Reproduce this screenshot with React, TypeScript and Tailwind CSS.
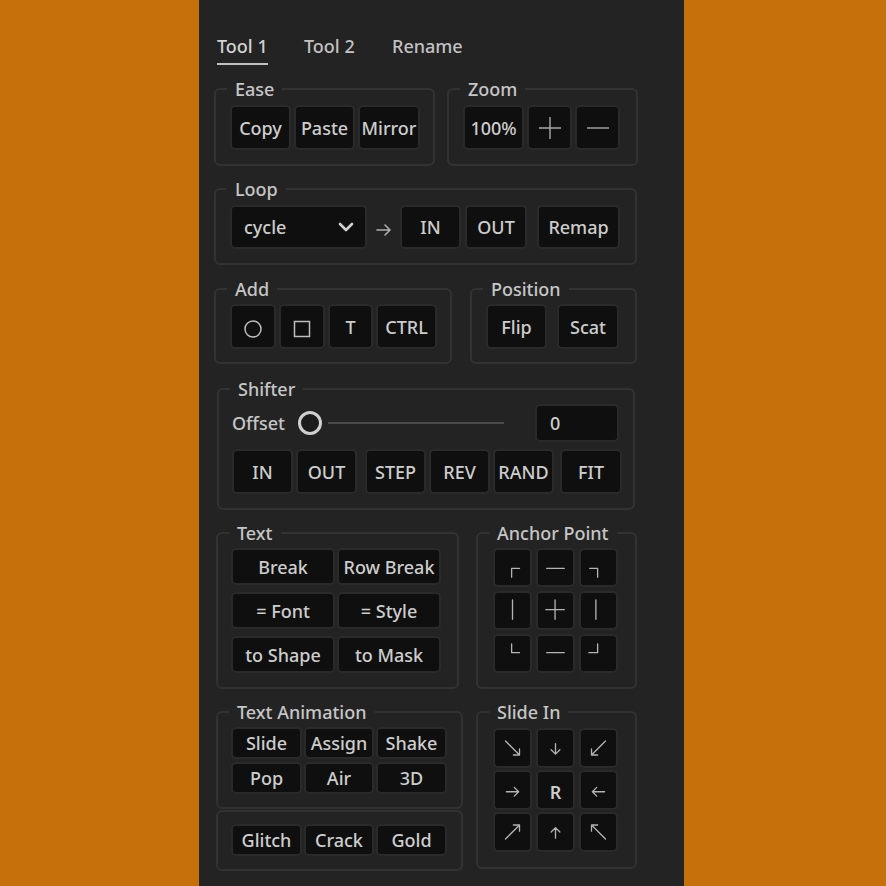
import type { ReactNode } from "react";

const Btn = ({ className = "", children }: { className?: string; children: ReactNode }) => (
  <div
    className={`flex items-center justify-center rounded-[5px] border-2 border-[#2a2a2a] bg-[#0f0f0f] pt-[1px] text-[18px] text-[#cdcdcd] ${className}`}
  >
    {children}
  </div>
);

const Group = ({ label, className = "", children }: { label?: string; className?: string; children: ReactNode }) => (
  <fieldset className={`rounded-[6px] border-2 border-[#323232] ${className}`}>
    {label && (
      <legend className="ml-[11px] px-[8px] text-[18px] leading-[24px] text-[#c6c6c6]">{label}</legend>
    )}
    {children}
  </fieldset>
);

const Icon = ({ d }: { d: string }) => (
  <svg viewBox="0 0 40 40" className="h-full w-full" fill="none" stroke="#b4b4b4" strokeWidth="1.5" strokeLinecap="round" strokeLinejoin="round">
    <path d={d} />
  </svg>
);

const anchors = [
  "M19 31V21H28",
  "M10 21H30",
  "M10 21H19V31",
  "M20 8V30",
  "M9 19H30M19.5 8V30",
  "M17 8V30",
  "M19 9V19H28",
  "M10 19H30",
  "M9 19H19V9",
];

const slides: (string | null)[] = [
  "M12 12L28 28M28 21V28H21",
  "M20 15V27M15 22L20 27L25 22",
  "M28 12L12 28M12 21V28H19",
  "M13 22H27M22 17L27 22L22 27",
  null,
  "M27 22H13M18 17L13 22L18 27",
  "M12 28L28 12M21 12H28V19",
  "M20 27V15M15 20L20 15L25 20",
  "M28 28L12 12M12 19V12H19",
];

export default function App() {
  return (
    <div className="min-h-screen overflow-hidden bg-[#c5700b] font-['Noto_Sans','Liberation_Sans',sans-serif] font-medium">
      <div className="ml-[199px] flex min-h-[886px] w-[485px] flex-col bg-[#232323] pb-[20px]">
        {/* Tabs */}
        <div className="ml-[18px] mt-[32px] flex text-[18px] leading-[28px]">
          <div className="w-[87px]">
            <span className="inline-block border-b-2 border-[#c0c0c0] pb-[3px] text-[#d2d2d2]">Tool 1</span>
          </div>
          <div className="w-[88px] text-[#c2c2c2]">Tool 2</div>
          <div className="text-[#c2c2c2]">Rename</div>
        </div>

        {/* Ease / Zoom */}
        <div className="ml-[15px] mt-[12px] flex gap-[12px]">
          <Group label="Ease" className="w-[221px]">
            <div className="flex gap-[3px] pb-[14px] pl-[14px] pt-[4px]">
              <Btn className="h-[45px] w-[61px]">Copy</Btn>
              <Btn className="h-[45px] w-[61px]">Paste</Btn>
              <Btn className="h-[45px] w-[62px]">Mirror</Btn>
            </div>
          </Group>
          <Group label="Zoom" className="w-[191px]">
            <div className="flex gap-[3px] pb-[14px] pl-[14px] pt-[4px]">
              <Btn className="h-[45px] w-[61px]">100%</Btn>
              <Btn className="h-[45px] w-[45px]">
                <svg viewBox="0 0 22 22" className="h-[22px] w-[22px]" stroke="#a8a8a8" strokeWidth="1.4">
                  <path d="M0 11H22M11 0V22" />
                </svg>
              </Btn>
              <Btn className="h-[45px] w-[45px]">
                <svg viewBox="0 0 22 22" className="h-[22px] w-[22px]" stroke="#a8a8a8" strokeWidth="1.4">
                  <path d="M0 11H22" />
                </svg>
              </Btn>
            </div>
          </Group>
        </div>

        {/* Loop */}
        <div className="ml-[15px] mt-[11px] flex">
          <Group label="Loop" className="w-[423px]">
            <div className="flex items-center pb-[14px] pl-[14px] pt-[4px]">
              <div className="flex h-[44px] w-[137px] items-center justify-between rounded-[5px] border-2 border-[#2a2a2a] bg-[#0f0f0f] pl-[12px] pr-[11px] text-[18px] text-[#cdcdcd]">
                <span className="pt-[1px]">cycle</span>
                <svg viewBox="0 0 16 10" className="h-[10px] w-[16px]" fill="none" stroke="#d0d0d0" strokeWidth="2.6" strokeLinecap="round" strokeLinejoin="round">
                  <path d="M2 2L8 8L14 2" />
                </svg>
              </div>
              <svg viewBox="0 0 16 12" className="ml-[9px] mt-[6px] h-[12px] w-[16px]" fill="none" stroke="#b0b0b0" strokeWidth="1.5" strokeLinecap="round" strokeLinejoin="round">
                <path d="M1 6H14M9 1L14 6L9 11" />
              </svg>
              <Btn className="ml-[8px] h-[44px] w-[61px]">IN</Btn>
              <Btn className="ml-[4px] h-[44px] w-[62px]">OUT</Btn>
              <Btn className="ml-[10px] h-[44px] w-[83px]">Remap</Btn>
            </div>
          </Group>
        </div>

        {/* Add / Position */}
        <div className="ml-[15px] mt-[12px] flex gap-[18px]">
          <Group label="Add" className="w-[238px]">
            <div className="flex gap-[3px] pb-[13px] pl-[14px] pt-[3px]">
              <Btn className="h-[45px] w-[46px]">
                <svg viewBox="0 0 20 20" className="mt-[4px] h-[20px] w-[20px]" fill="none" stroke="#bdbdbd" strokeWidth="1.5">
                  <circle cx="10" cy="10" r="8" />
                </svg>
              </Btn>
              <Btn className="h-[45px] w-[46px]">
                <svg viewBox="0 0 18 18" className="mt-[3px] h-[18px] w-[18px]" fill="none" stroke="#bdbdbd" strokeWidth="1.5">
                  <rect x="1.5" y="1.5" width="15" height="15" />
                </svg>
              </Btn>
              <Btn className="h-[45px] w-[45px]">T</Btn>
              <Btn className="h-[45px] w-[61px]">CTRL</Btn>
            </div>
          </Group>
          <Group label="Position" className="w-[167px]">
            <div className="flex gap-[10px] pb-[13px] pl-[14px] pt-[3px]">
              <Btn className="h-[45px] w-[61px]">Flip</Btn>
              <Btn className="h-[45px] w-[62px]">Scat</Btn>
            </div>
          </Group>
        </div>

        {/* Shifter */}
        <div className="ml-[18px] mt-[13px] flex">
          <Group label="Shifter" className="w-[418px]">
            <div className="pb-[14px] pl-[13px] pt-[3px]">
              <div className="flex h-[38px] items-center">
                <span className="w-[66px] pt-[1px] text-[18px] text-[#c6c6c6]">Offset</span>
                <div className="flex w-[206px] items-center">
                  <div className="h-[24px] w-[24px] rounded-full border-[3px] border-[#d0d0d0] bg-[#1c1c1c]" />
                  <div className="ml-[6px] h-[2px] flex-1 bg-[#4a4a4a]" />
                </div>
                <div className="ml-[31px] flex h-[38px] w-[84px] items-center rounded-[5px] border-2 border-[#2a2a2a] bg-[#0f0f0f] pl-[13px] pt-[1px] text-[18px] text-[#cdcdcd]">
                  0
                </div>
              </div>
              <div className="mt-[7px] flex">
                <Btn className="h-[45px] w-[61px]">IN</Btn>
                <Btn className="ml-[3px] h-[45px] w-[61px]">OUT</Btn>
                <Btn className="ml-[8px] h-[45px] w-[61px]">STEP</Btn>
                <Btn className="ml-[3px] h-[45px] w-[61px]">REV</Btn>
                <Btn className="ml-[3px] h-[45px] w-[61px]">RAND</Btn>
                <Btn className="ml-[6px] h-[45px] w-[62px]">FIT</Btn>
              </div>
            </div>
          </Group>
        </div>

        {/* Text / Anchor Point */}
        <div className="ml-[17px] mt-[11px] flex gap-[17px]">
          <Group label="Text" className="w-[243px]">
            <div className="grid grid-cols-[104px_104px] gap-x-[2px] gap-y-[7px] pb-[14px] pl-[13px] pt-[3px]">
              {["Break", "Row Break", "= Font", "= Style", "to Shape", "to Mask"].map((t) => (
                <Btn key={t} className="h-[37px]">{t}</Btn>
              ))}
            </div>
          </Group>
          <Group label="Anchor Point" className="w-[161px]">
            <div className="grid grid-cols-[39px_39px_39px] gap-[4px] pb-[14px] pl-[15px] pt-[3px]">
              {anchors.map((d) => (
                <Btn key={d} className="h-[39px] !pt-0">
                  <Icon d={d} />
                </Btn>
              ))}
            </div>
          </Group>
        </div>

        {/* Text Animation / Slide In */}
        <div className="ml-[17px] mt-[11px] flex items-start gap-[13px]">
          <div className="flex w-[247px] flex-col">
            <Group label="Text Animation">
              <div className="grid grid-cols-[71px_70px_71px] gap-x-[2px] gap-y-[3px] pb-[13px] pl-[13px] pt-[3px]">
                {["Slide", "Assign", "Shake", "Pop", "Air", "3D"].map((t) => (
                  <Btn key={t} className="h-[32px]">{t}</Btn>
                ))}
              </div>
            </Group>
            <div className="mt-[1px] rounded-[6px] border-2 border-[#323232] pb-[13px] pl-[13px] pt-[12px]">
              <div className="grid grid-cols-[71px_70px_71px] gap-x-[2px]">
                {["Glitch", "Crack", "Gold"].map((t) => (
                  <Btn key={t} className="h-[32px]">{t}</Btn>
                ))}
              </div>
            </div>
          </div>
          <Group label="Slide In" className="w-[161px]">
            <div className="grid grid-cols-[39px_39px_39px] gap-x-[4px] gap-y-[2px] pb-[15px] pl-[15px] pt-[4px]">
              {slides.map((d, i) => (
                <Btn key={i} className="h-[40px] !pt-0">
                  {d ? <Icon d={d} /> : <span className="pt-[4px] font-semibold">R</span>}
                </Btn>
              ))}
            </div>
          </Group>
        </div>
      </div>
    </div>
  );
}
